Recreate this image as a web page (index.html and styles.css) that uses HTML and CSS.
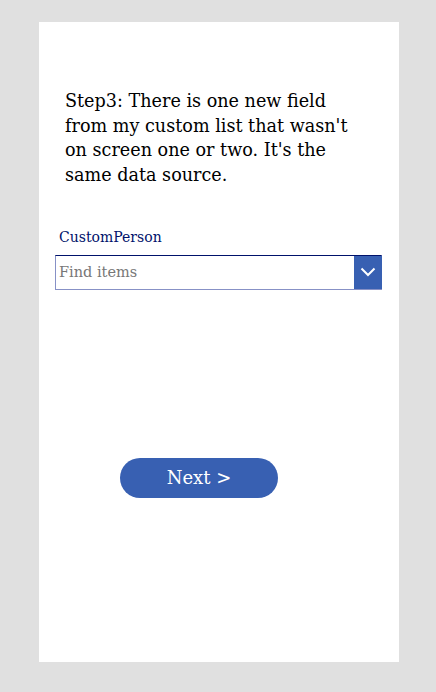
FILE: index.html
```html
<!DOCTYPE html>
<html>
<head>
<meta charset="utf-8">
<link rel="stylesheet" href="styles.css">
</head>
<body>
<div class="screen">
  <p class="intro">Step3: There is one new field from my custom list that wasn't on screen one or two. It's the same data source.</p>
  <div class="field">
    <div class="label">CustomPerson</div>
    <div class="combo">
      <span class="placeholder">Find items</span>
      <span class="chev"><svg width="16" height="10" viewBox="0 0 16 10"><path d="M1.5 1.5 L8 8 L14.5 1.5" fill="none" stroke="#fff" stroke-width="2"/></svg></span>
    </div>
  </div>
  <div class="actions">
    <button class="next">Next &gt;</button>
  </div>
</div>
</body>
</html>
```
FILE: styles.css
```css
html, body { margin: 0; padding: 0; }
body {
  background: #e0e0e0;
  width: 436px;
  height: 692px;
  font-family: "DejaVu Serif", Georgia, serif;
}
.screen {
  margin: 22px 0 0 39px;
  width: 360px;
  height: 640px;
  background: #fff;
  box-sizing: border-box;
  padding-top: 67px;
}
.intro {
  margin: 0 0 0 26px;
  width: 290px;
  font-size: 17.6px;
  line-height: 24.7px;
  color: #000;
}
.field {
  margin: 39px 0 0 16px;
}
.label {
  margin-left: 4px;
  font-size: 14px;
  line-height: 20px;
  color: #00126b;
}
.combo {
  margin-top: 8px;
  width: 327px;
  height: 35px;
  box-sizing: border-box;
  border: 1px solid #8791c6;
  border-top-color: #00126b;
  display: flex;
  align-items: stretch;
}
.placeholder {
  flex: 1;
  display: flex;
  align-items: center;
  padding-left: 3px;
  font-size: 14.5px;
  color: #777;
}
.chev {
  width: 28px;
  margin-right: -1px;
  background: #3860b2;
  display: flex;
  align-items: center;
  justify-content: center;
}
.actions {
  margin: 168px 0 0 81px;
}
.next {
  display: block;
  width: 158px;
  height: 40px;
  border: none;
  border-radius: 20px;
  background: #3860b2;
  color: #fff;
  font-family: "DejaVu Serif", Georgia, serif;
  font-size: 18px;
  padding: 0;
}
```
